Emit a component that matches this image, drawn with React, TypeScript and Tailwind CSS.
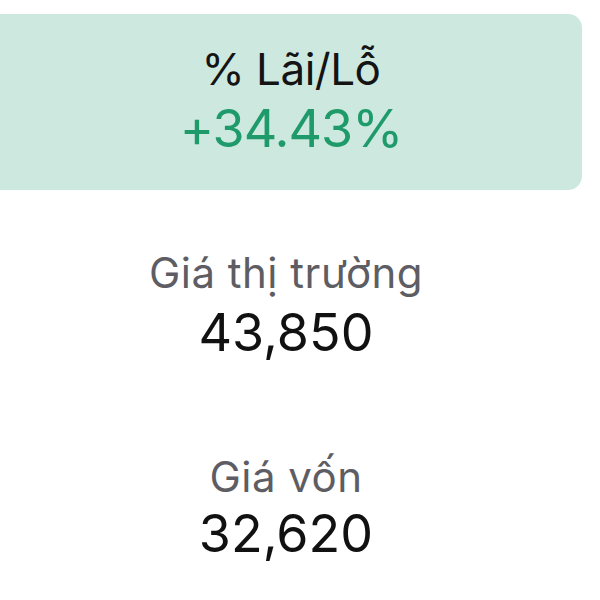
const font = { fontFamily: "Inter, 'Noto Sans', sans-serif" };

// ---------------------------------------------------------------------------
// Stat block
// ---------------------------------------------------------------------------

interface StatProps {
  label: string;
  value: string;
  gap: string;
}

const Stat = ({ label, value, gap }: StatProps) => (
  <div className={`flex flex-col items-center ${gap}`}>
    <span className="text-[42px] leading-[48px] tracking-[0.5px] text-[#5d5d63]">
      {label}
    </span>
    <span className="text-[52px] leading-[60px] text-[#111111]">{value}</span>
  </div>
);

// ---------------------------------------------------------------------------
// App
// ---------------------------------------------------------------------------

export default function App() {
  return (
    <div className="w-[600px] h-[600px] bg-white overflow-hidden" style={font}>
      {/* Profit / loss card */}
      <div className="mt-[14px] w-[582px] h-[176px] rounded-r-[14px] bg-[#cde9df] flex flex-col items-center pt-[31px] gap-[6px]">
        <span className="text-[44px] leading-[48px] tracking-[-0.5px] text-[#141414]">
          % Lãi/Lỗ
        </span>
        <span className="text-[52px] leading-[60px] tracking-[-1px] text-[#1e9a6b]">
          +34.43%
        </span>
      </div>

      <div className="w-[572px] flex flex-col gap-[90px] pt-[59px]">
        <Stat label="Giá thị trường" value="43,850" gap="gap-[6px]" />
        <Stat label="Giá vốn" value="32,620" gap="gap-[3px]" />
      </div>
    </div>
  );
}
